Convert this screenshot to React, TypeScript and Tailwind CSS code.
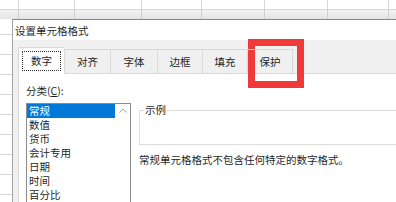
import React from 'react'

const font = { fontFamily: '"Noto Sans CJK SC", "Noto Sans", sans-serif' }

const topCols = [19, 56, 67, 60, 63, 63, 61, 40]
const tabs = ['数字', '对齐', '字体', '边框', '填充', '保护']
const tabWidths = [46, 46, 47, 45, 45, 46]
const categories = ['常规', '数值', '货币', '会计专用', '日期', '时间', '百分比']

function SheetTop() {
  return (
    <div className="flex flex-col h-[19px]">
      <div className="flex h-[10px]">
        {topCols.map((w, i) => (
          <div key={i} style={{ width: w }} className="shrink-0 border-r border-b border-[#d6d6d6]" />
        ))}
      </div>
      <div className="flex h-[9px] bg-gradient-to-b from-[#f4f4f4] to-[#e4e4e4]">
        {topCols.map((w, i) => (
          <div key={i} style={{ width: w }} className="shrink-0 border-r border-[#d0d0d0]" />
        ))}
      </div>
    </div>
  )
}

function SheetLeft() {
  return (
    <div className="w-[12px] shrink-0 flex flex-col">
      <div className="h-[16px] shrink-0 border-b border-[#d6d6d6]" />
      {Array.from({ length: 9 }).map((_, i) => (
        <div key={i} className="h-[20px] shrink-0 border-b border-[#d6d6d6]" />
      ))}
    </div>
  )
}

export default function App() {
  return (
    <div className="relative w-[396px] h-[202px] overflow-hidden bg-white text-[10.5px] leading-[14px] text-[#1f1f1f]" style={font}>
      <SheetTop />
      <div className="flex">
        <SheetLeft />
        {/* Dialog */}
        <div className="w-[420px] shrink-0 h-[183px] flex flex-col border-l border-t border-[#a4a4a4] border-t-[#5a8fc8] bg-[#f0f0f0]">
          <div className="h-[20px] bg-white pl-[2px] pt-[4px] shrink-0">设置单元格格式</div>

          {/* Tabs */}
          <div className="relative z-10 flex items-end h-[33px] pl-[5px] shrink-0">
            {tabs.map((t, i) =>
              i === 0 ? (
                <div
                  key={t}
                  style={{ width: tabWidths[i] }}
                  className="h-[27px] -mb-px bg-white border-l border-t border-[#d9d9d9] flex items-center justify-center p-[3px]"
                >
                  <div className="w-full h-full border border-dotted border-[#333] flex items-center justify-center">
                    {t}
                  </div>
                </div>
              ) : (
                <div
                  key={t}
                  style={{ width: tabWidths[i] }}
                  className={`h-[24px] border-l border-t border-[#d9d9d9] flex items-center justify-center ${
                    i === tabs.length - 1 ? 'border-r' : ''
                  }`}
                >
                  {t}
                </div>
              )
            )}
          </div>

          {/* Panel */}
          <div className="flex-1 ml-[5px] bg-white border-l border-t border-[#d9d9d9] pl-[7px] pt-[10px] flex flex-col">
            <div>
              分类(<span className="underline">C</span>):
            </div>
            <div className="flex mt-[5px] gap-[8px]">
              <div className="w-[105px] h-[110px] shrink-0 border border-[#8c8c8c] flex">
                <div className="flex-1 flex flex-col">
                  {categories.map((c, i) => (
                    <div
                      key={c}
                      className={`h-[14px] shrink-0 pl-[2px] ${i === 0 ? 'bg-[#0078d7] text-white' : ''}`}
                    >
                      {c}
                    </div>
                  ))}
                </div>
                <div className="w-[15px] shrink-0 flex justify-center pt-[4px]">
                  <svg width="8" height="5" viewBox="0 0 8 5">
                    <path d="M0.5 4.5 L4 1 L7.5 4.5" fill="none" stroke="#a6a6a6" strokeWidth="1" />
                  </svg>
                </div>
              </div>
              <div className="flex-1 flex flex-col">
                <fieldset className="h-[42px] border border-[#dcdcdc] pl-[4px]">
                  <legend className="px-[1px] leading-[14px]">示例</legend>
                </fieldset>
                <div className="mt-[8px]">常规单元格格式不包含任何特定的数字格式。</div>
              </div>
            </div>
          </div>
        </div>
      </div>

      {/* highlight */}
      <div className="absolute left-[248px] top-[39px] w-[56px] h-[49px] border-[7px] border-[#f03a3a]" />
    </div>
  )
}
